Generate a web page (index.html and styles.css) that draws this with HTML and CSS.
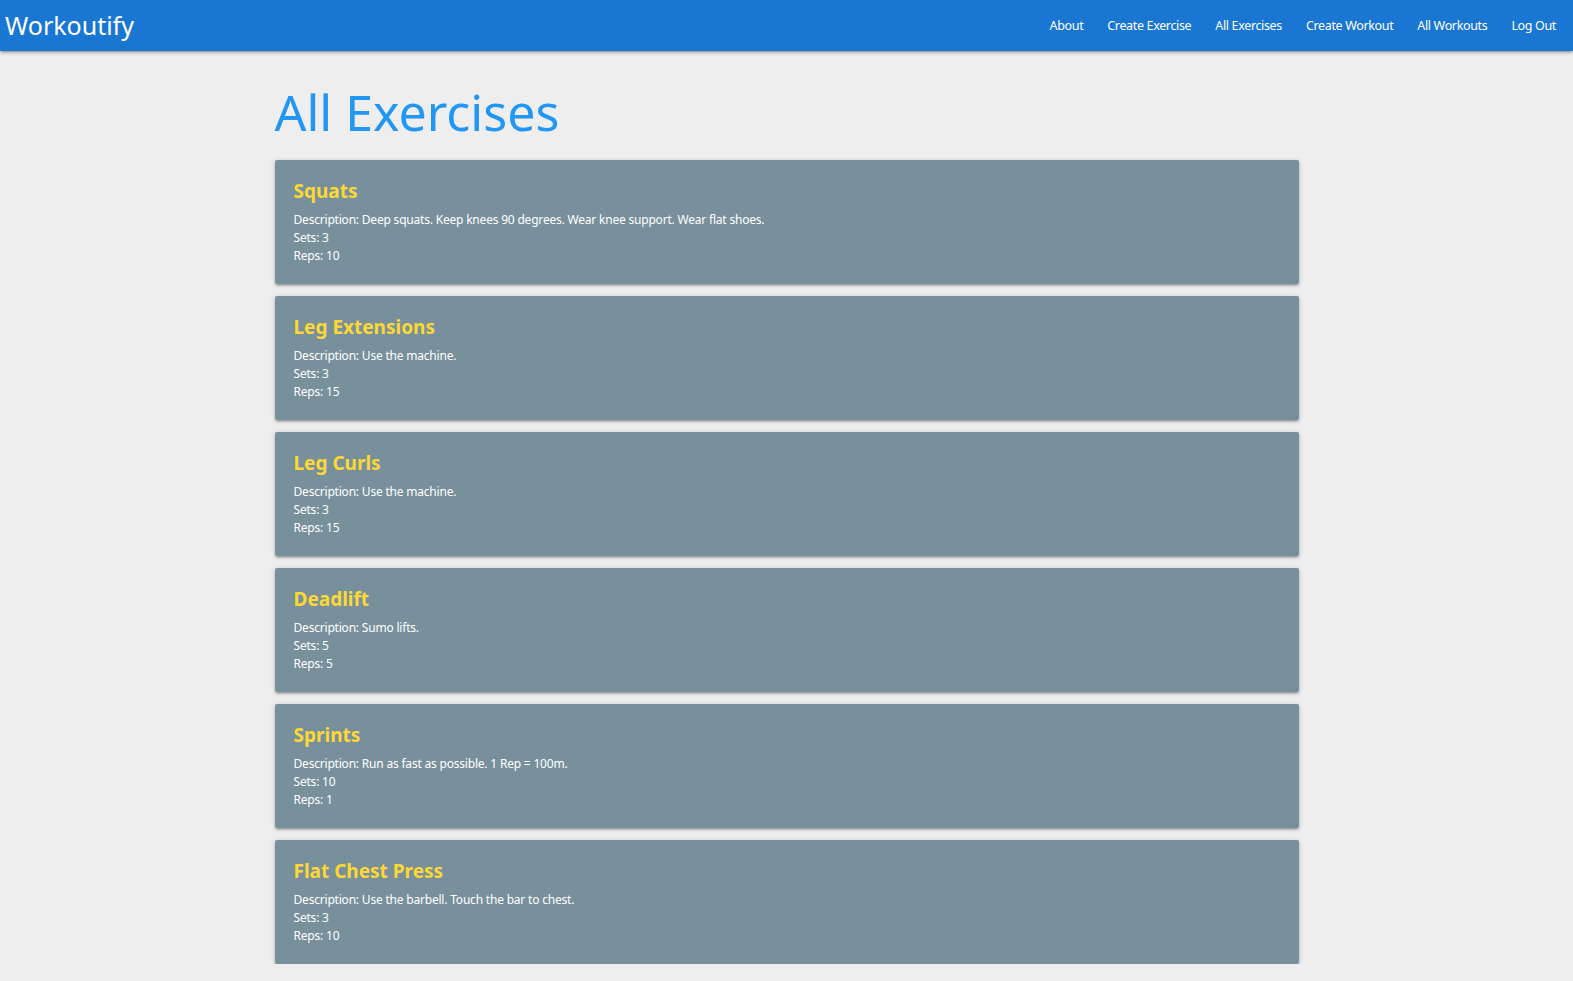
FILE: index.html
```html
<!DOCTYPE html>
<html lang="en">
<head>
<meta charset="utf-8">
<title>Workoutify</title>
<link rel="stylesheet" href="styles.css">
</head>
<body>
<nav class="navbar">
  <a class="brand" href="#">Workoutify</a>
  <ul class="nav-links">
    <li><a href="#">About</a></li>
    <li><a href="#">Create Exercise</a></li>
    <li><a href="#">All Exercises</a></li>
    <li><a href="#">Create Workout</a></li>
    <li><a href="#">All Workouts</a></li>
    <li><a href="#">Log Out</a></li>
  </ul>
</nav>
<main class="container">
  <h1 class="page-title">All Exercises</h1>
  <div class="card-list">
    <section class="card">
      <h2 class="card-title">Squats</h2>
      <p class="card-line">Description: Deep squats. Keep knees 90 degrees. Wear knee support. Wear flat shoes.</p>
      <p class="card-line">Sets: 3</p>
      <p class="card-line">Reps: 10</p>
    </section>
    <section class="card">
      <h2 class="card-title">Leg Extensions</h2>
      <p class="card-line">Description: Use the machine.</p>
      <p class="card-line">Sets: 3</p>
      <p class="card-line">Reps: 15</p>
    </section>
    <section class="card">
      <h2 class="card-title">Leg Curls</h2>
      <p class="card-line">Description: Use the machine.</p>
      <p class="card-line">Sets: 3</p>
      <p class="card-line">Reps: 15</p>
    </section>
    <section class="card">
      <h2 class="card-title">Deadlift</h2>
      <p class="card-line">Description: Sumo lifts.</p>
      <p class="card-line">Sets: 5</p>
      <p class="card-line">Reps: 5</p>
    </section>
    <section class="card">
      <h2 class="card-title">Sprints</h2>
      <p class="card-line">Description: Run as fast as possible. 1 Rep = 100m.</p>
      <p class="card-line">Sets: 10</p>
      <p class="card-line">Reps: 1</p>
    </section>
    <section class="card">
      <h2 class="card-title">Flat Chest Press</h2>
      <p class="card-line">Description: Use the barbell. Touch the bar to chest.</p>
      <p class="card-line">Sets: 3</p>
      <p class="card-line">Reps: 10</p>
    </section>
  </div>
</main>
</body>
</html>
```
FILE: styles.css
```css
* { box-sizing: border-box; }
html, body {
  margin: 0;
  padding: 0;
}
body {
  background: #eeeeee;
  font-family: "Noto Sans", "Open Sans", sans-serif;
  color: #fff;
  overflow: hidden;
}
.navbar {
  height: 51px;
  background: #1976d2;
  display: flex;
  align-items: center;
  justify-content: space-between;
  padding: 0 5px;
  box-shadow: 0 2px 2px 0 rgba(0,0,0,0.14), 0 3px 1px -2px rgba(0,0,0,0.12), 0 1px 5px 0 rgba(0,0,0,0.2);
  position: relative;
}
.brand {
  color: #fff;
  text-decoration: none;
  font-size: 25px;
  line-height: 51px;
}
.nav-links {
  list-style: none;
  margin: 0;
  padding: 0;
  display: flex;
}
.nav-links a {
  display: block;
  color: #fff;
  text-decoration: none;
  font-size: 12.5px;
  letter-spacing: -0.35px;
  padding: 0 12px;
  line-height: 51px;
}
.container {
  width: 1024px;
  margin: 0 auto;
}
.page-title {
  margin: 0;
  padding-top: 26px;
  height: 109px;
  font-size: 50px;
  font-weight: 400;
  line-height: 70px;
  color: #2196f3;
}
.card-list {
  display: flex;
  flex-direction: column;
  gap: 12px;
}
.card {
  background: #78909c;
  height: 124px;
  padding: 17px 19px;
  border-radius: 2px;
  box-shadow: 0 2px 2px 0 rgba(0,0,0,0.14), 0 3px 1px -2px rgba(0,0,0,0.12), 0 1px 5px 0 rgba(0,0,0,0.2);
}
.card-title {
  margin: 0 0 6px;
  font-size: 19px;
  font-weight: 700;
  line-height: 28px;
  color: #fdd835;
}
.card-line {
  margin: 0;
  font-size: 12px;
  letter-spacing: -0.2px;
  line-height: 18px;
}
```
